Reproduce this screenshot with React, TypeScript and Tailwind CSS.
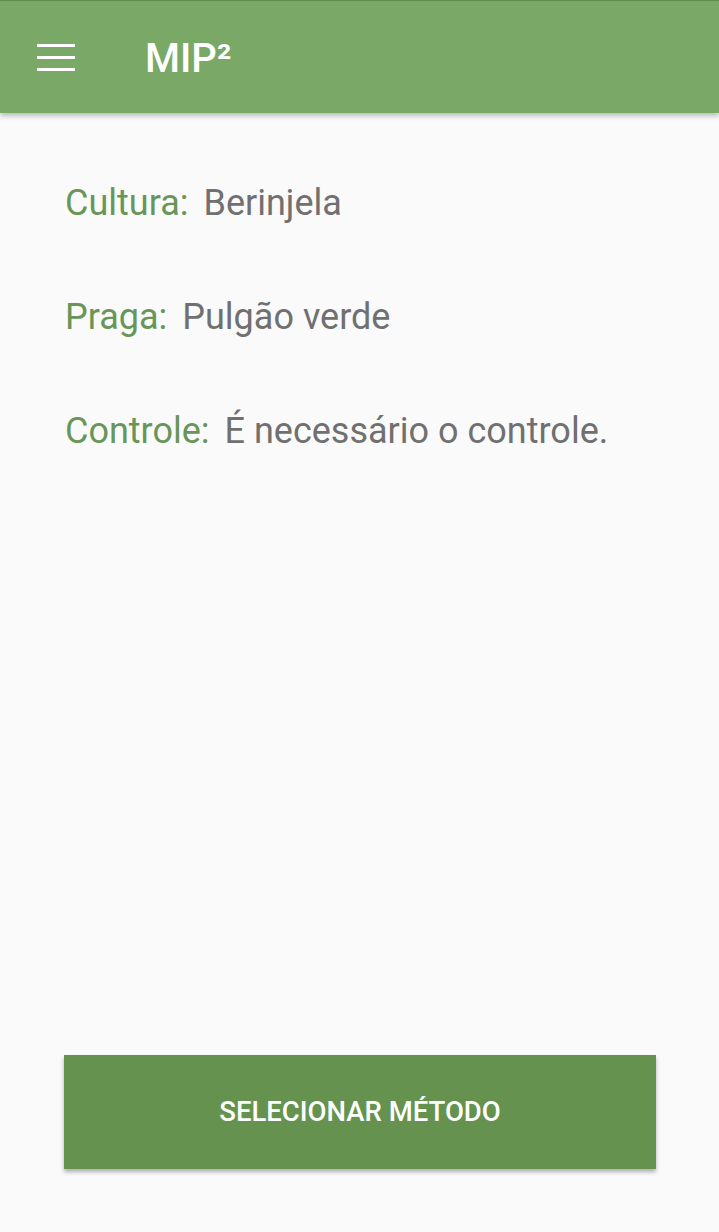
export default function App() {
  const rows = [
    { label: "Cultura:", value: "Berinjela" },
    { label: "Praga:", value: "Pulgão verde" },
    { label: "Controle:", value: "É necessário o controle." },
  ];

  return (
    <div
      className="flex h-[1232px] w-[719px] flex-col bg-[#fafafa]"
      style={{ fontFamily: "Roboto, 'Noto Sans', sans-serif" }}
    >
      {/* top bar */}
      <header className="relative z-10 flex h-[113px] shrink-0 items-center border-t border-[#5f8b4e] bg-[#7aa867] shadow-[0_3px_5px_rgba(0,0,0,0.25)]">
        <button className="ml-[37px] flex h-[27px] w-[38px] flex-col justify-between">
          <span className="block h-[3px] w-full bg-white" />
          <span className="block h-[3px] w-full bg-white" />
          <span className="block h-[3px] w-full bg-white" />
        </button>
        <h1 className="ml-[70px] mt-[3px] text-[40px] font-medium leading-none text-white">MIP²</h1>
      </header>

      {/* details */}
      <main className="flex flex-1 flex-col px-[65px] pt-[72px]">
        <div className="flex flex-col gap-[78px]">
          {rows.map((r) => (
            <p key={r.label} className="text-[36px] leading-[36px]">
              <span className="text-[#689658]">{r.label}</span>
              <span className="ml-[15px] text-[#707070]">{r.value}</span>
            </p>
          ))}
        </div>

        <div className="mt-auto mb-[63px]">
          <button className="-ml-[1px] flex h-[114px] w-[592px] items-center justify-center bg-[#65934f] text-[27.5px] font-medium uppercase text-white shadow-[0_3px_4px_rgba(0,0,0,0.3)]">
            Selecionar método
          </button>
        </div>
      </main>
    </div>
  );
}
